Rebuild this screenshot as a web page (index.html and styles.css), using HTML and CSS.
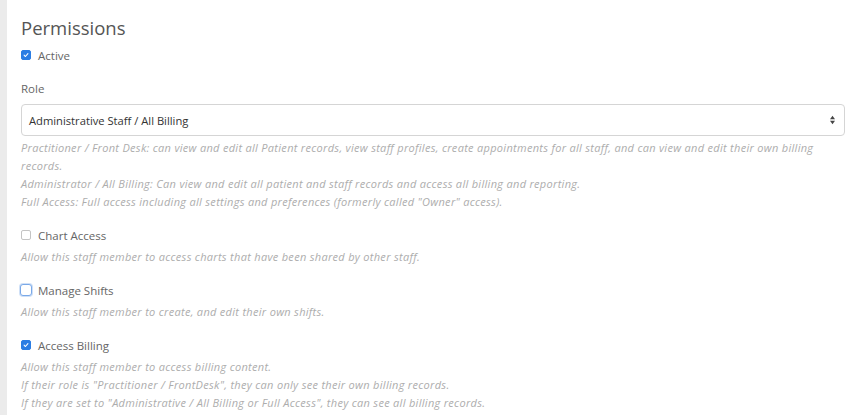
FILE: index.html
```html
<!DOCTYPE html>
<html>
<head>
<meta charset="utf-8">
<link rel="stylesheet" href="styles.css">
</head>
<body>
<div class="page">
  <div class="sidebar"></div>
  <div class="content">
    <h2 class="title">Permissions</h2>
    <div class="check-row">
      <span class="box checked"><svg viewBox="0 0 10 10"><path d="M2.6 5.2 L4.3 6.9 L7.4 3.3" fill="none" stroke="#fff" stroke-width="1.3" stroke-linecap="round" stroke-linejoin="round"/></svg></span>
      <span class="check-label">Active</span>
    </div>
    <div class="field-label">Role</div>
    <div class="select">
      <span class="select-value">Administrative Staff / All Billing</span>
      <svg class="arrows" viewBox="0 0 8 12"><path d="M4 1 L7 5 L1 5 Z" fill="#444"/><path d="M4 11 L7 7 L1 7 Z" fill="#444"/></svg>
    </div>
    <div class="help">
      <p>Practitioner / Front Desk: can view and edit all Patient records, view staff profiles, create appointments for all staff, and can view and edit their own billing records.</p>
      <p>Administrator / All Billing: Can view and edit all patient and staff records and access all billing and reporting.</p>
      <p>Full Access: Full access including all settings and preferences (formerly called "Owner" access).</p>
    </div>

    <div class="option">
      <div class="check-row">
        <span class="box"></span>
        <span class="check-label">Chart Access</span>
      </div>
      <div class="help">
        <p>Allow this staff member to access charts that have been shared by other staff.</p>
      </div>
    </div>

    <div class="option">
      <div class="check-row">
        <span class="box focused"></span>
        <span class="check-label">Manage Shifts</span>
      </div>
      <div class="help">
        <p>Allow this staff member to create, and edit their own shifts.</p>
      </div>
    </div>

    <div class="option">
      <div class="check-row">
        <span class="box checked"><svg viewBox="0 0 10 10"><path d="M2.6 5.2 L4.3 6.9 L7.4 3.3" fill="none" stroke="#fff" stroke-width="1.3" stroke-linecap="round" stroke-linejoin="round"/></svg></span>
        <span class="check-label">Access Billing</span>
      </div>
      <div class="help">
        <p>Allow this staff member to access billing content.</p>
        <p>If their role is "Practitioner / FrontDesk", they can only see their own billing records.</p>
        <p>If they are set to "Administrative / All Billing or Full Access", they can see all billing records.</p>
      </div>
    </div>
  </div>
</div>
</body>
</html>
```
FILE: styles.css
```css
html, body {
  margin: 0;
  padding: 0;
  background: #fff;
}
body {
  font-family: "Open Sans", "Liberation Sans", sans-serif;
  color: #555;
}
.page {
  display: flex;
  width: 850px;
  height: 415px;
  overflow: hidden;
}
.sidebar {
  width: 7px;
  flex: none;
  background: #ebebeb;
}
.content {
  flex: 1;
  padding: 14px 5px 0 14px;
}
.title {
  margin: 0;
  font-weight: 400;
  font-size: 18.5px;
  line-height: 28px;
  color: #555;
}
.check-row {
  display: flex;
  align-items: center;
  height: 18px;
}
.title + .check-row {
  margin-top: 4px;
}
.box {
  width: 10px;
  height: 10px;
  box-sizing: border-box;
  border: 1px solid #c4c4c4;
  border-radius: 2px;
  background: #fff;
  margin-right: 7px;
  flex: none;
  display: flex;
}
.box svg {
  width: 100%;
  height: 100%;
}
.box.checked {
  background: #2b7de3;
  border-color: #2b7de3;
}
.box.focused {
  width: 12px;
  height: 12px;
  margin-left: -1px;
  margin-right: 6px;
  border: 1px solid #7aa9e8;
  border-radius: 3px;
  box-shadow: 0 0 0 1px #cfe0f7;
}
.check-label {
  font-size: 11.5px;
  color: #666;
}
.field-label {
  margin-top: 17px;
  font-size: 11.5px;
  line-height: 16px;
  color: #666;
}
.select {
  margin-top: 7px;
  height: 32px;
  box-sizing: border-box;
  border: 1px solid #d5d5d5;
  border-radius: 4px;
  display: flex;
  align-items: center;
  justify-content: space-between;
  padding: 0 8px 0 7px;
}
.select-value {
  font-size: 11.2px;
  color: #333;
}
.arrows {
  width: 7px;
  height: 10px;
}
.help {
  margin-top: 3px;
}
.help p {
  margin: 0;
  font-size: 11px;
  line-height: 18px;
  font-style: italic;
  letter-spacing: 0.3px;
  color: #adadad;
}
.option {
  margin-top: 15px;
}
.option .help {
  margin-top: 4px;
}
```
